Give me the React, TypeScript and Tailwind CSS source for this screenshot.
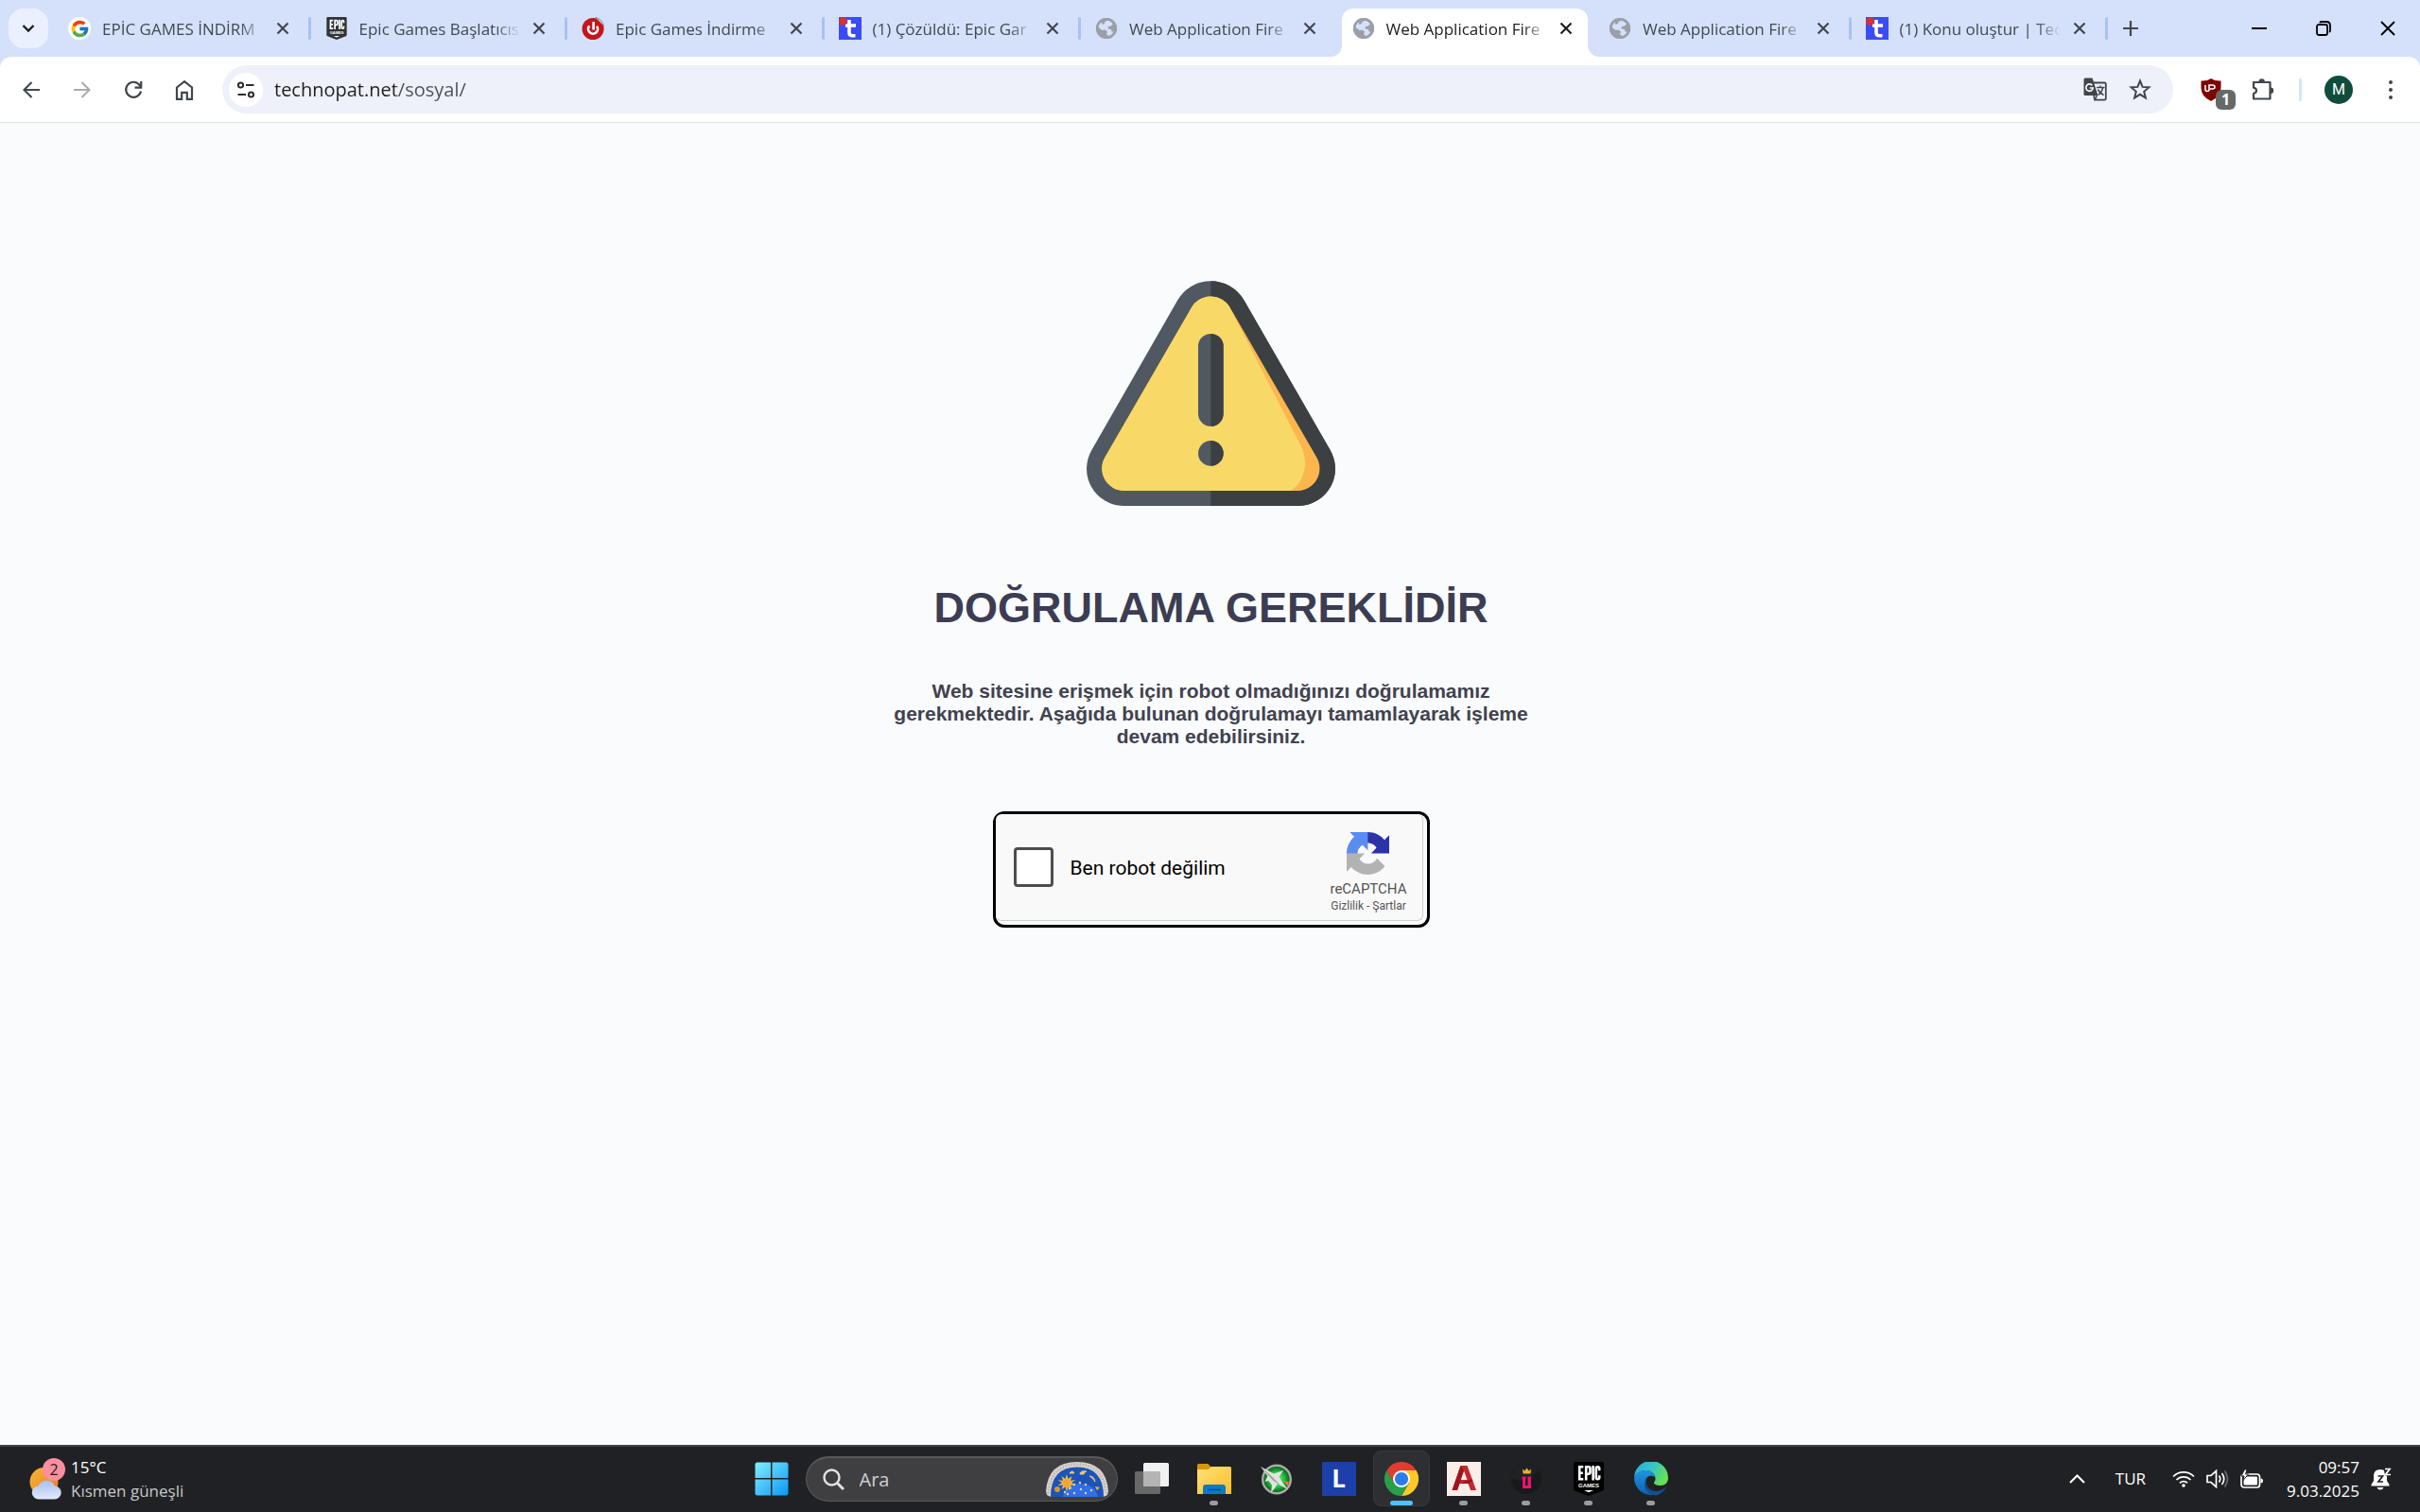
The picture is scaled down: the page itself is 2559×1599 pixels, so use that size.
import type { ReactNode } from "react";
import { FcGoogle } from "react-icons/fc";

/* ================= TYPES ================= */

interface TabData {
  title: string;
  icon: ReactNode;
  active?: boolean;
  separator?: boolean;
}

interface TaskbarAppProps {
  label: string;
  children: ReactNode;
  running?: boolean;
  active?: boolean;
}

/* ================= FAVICONS ================= */

const GlobeIcon = () => (
  <svg viewBox="0 0 24 24" className="size-6">
    <circle cx="12" cy="12" r="11" fill="#9aa0a6" />
    <path
      d="M14 3.500q3 .8 5 3.500l-2 2.500-3 .5-.5 2.500 3.500.5.500 2.500 2.500 0q-1.500 4-5.500 5l-2.500-2.500 1-2.500-2.500-2-3 .5-4.500-3.500q.5-3.500 3.500-5.500l1 3 2.500-1 .5-2z"
      fill="#d5e1fb"
    />
    <circle cx="12" cy="12" r="9.800" fill="none" stroke="#9aa0a6" strokeWidth="2.600" />
  </svg>
);

const GoogleIcon = () => (
  <span className="flex size-6 items-center justify-center rounded-full bg-white">
    <FcGoogle size={21} />
  </span>
);

const EpicIcon = ({ className, fill }: { className: string; fill: string }) => (
  <svg viewBox="0 0 32 36" className={className}>
    <path d="M2 0h28a2 2 0 0 1 2 2v26.500a2 2 0 0 1-1.300 1.900L16 36 1.300 30.400A2 2 0 0 1 0 28.500V2a2 2 0 0 1 2-2z" fill={fill} />
    <g fill="none" stroke="#fff" strokeWidth="2.600">
      <path d="M10.300 5.300H6.200v13h4.100M6.200 11.700h3.700" />
      <path d="M13.200 19.500v-14.200h2.600q1.700 0 1.700 1.700v4q0 1.700-1.700 1.700h-2.600" />
      <path d="M20.600 4v15.500" />
      <path d="M27.200 9.300V7q0-1.700-1.700-1.700t-1.700 1.700v9.600q0 1.700 1.700 1.700t1.700-1.700v-2.400" />
    </g>
    <text x="16" y="26.500" textAnchor="middle" fontFamily="Liberation Sans" fontWeight="700" fontSize="6" fill="#fff">
      GAMES
    </text>
    <path d="M11 30h10l-5 2.300z" fill="#fff" />
  </svg>
);

const PowerIcon = () => (
  <svg viewBox="0 0 24 24" className="size-6">
    <circle cx="12" cy="12.500" r="11.500" fill="#c4161c" />
    <path d="M14.500 0 Q22 2 23.500 9.500 L19 5z" fill="#c9c9c9" stroke="#777" strokeWidth=".6" />
    <path d="M12.600 5v8.500" stroke="#fff" strokeWidth="2.600" />
    <path d="M8.300 9.300a5 5 0 1 0 7.800.4" fill="none" stroke="#fff" strokeWidth="2.600" />
  </svg>
);

const TechnopatIcon = () => (
  <svg viewBox="0 0 24 24" className="size-6">
    <path d="M0 0h24v24H0z" fill="#3a4cf8" />
    <path d="M11 3v13.500q0 3.300 3.500 3.300h3M7 9h11" fill="none" stroke="#fff" strokeWidth="3.600" />
    <circle cx="4.500" cy="4.500" r="4.300" fill="#dc2f2f" />
  </svg>
);

/* ================= TABS ================= */

const TABS: TabData[] = [
  { title: "EPİC GAMES İNDİRM", icon: <GoogleIcon />, separator: true },
  { title: "Epic Games Başlatıcıs", icon: <EpicIcon className="h-6 w-6" fill="#303438" />, separator: true },
  { title: "Epic Games İndirme", icon: <PowerIcon />, separator: true },
  { title: "(1) Çözüldü: Epic Gar", icon: <TechnopatIcon />, separator: true },
  { title: "Web Application Fire", icon: <GlobeIcon /> },
  { title: "Web Application Fire", icon: <GlobeIcon />, active: true },
  { title: "Web Application Fire", icon: <GlobeIcon />, separator: true },
  { title: "(1) Konu oluştur | Tec", icon: <TechnopatIcon />, separator: true },
];

const Tab = ({ title, icon, active, separator }: TabData) => (
  <div className="relative flex h-full min-w-0 flex-1 items-center pl-[15px]">
    {active && (
      <div className="absolute top-[9px] right-[7px] bottom-0 left-[4px] rounded-t-xl bg-white">
        <svg viewBox="0 0 12 12" className="absolute bottom-0 -left-3 size-3">
          <path d="M12 0v12H0A12 12 0 0 0 12 0z" fill="#fff" />
        </svg>
        <svg viewBox="0 0 12 12" className="absolute -right-3 bottom-0 size-3">
          <path d="M0 0v12h12A12 12 0 0 1 0 0z" fill="#fff" />
        </svg>
      </div>
    )}
    <span className="relative shrink-0">{icon}</span>
    <span
      className={`relative ml-3 min-w-0 flex-1 overflow-hidden pt-[2px] text-[17px] leading-8 whitespace-nowrap mask-r-from-85% ${
        active ? "text-[#202124]" : "text-[#41494f]"
      }`}
    >
      {title}
    </span>
    <button aria-label="Sekmeyi kapat" className="relative mr-[15px] ml-2 flex size-6 shrink-0 items-center justify-center">
      <svg viewBox="0 0 14 14" className="size-[14px]">
        <path d="M1.500 1.500l11 11m0-11l-11 11" stroke={active ? "#1f1f1f" : "#3f474d"} strokeWidth="2.200" />
      </svg>
    </button>
    <span className={`h-6 w-[3px] shrink-0 rounded ${separator ? "bg-[#a8c1f6]" : ""}`} />
  </div>
);

const TabStrip = () => (
  <div className="flex h-[60px] items-center bg-[#d5e1fb]">
    <button aria-label="Sekmelerde ara" className="mr-[6px] ml-[9px] flex size-[42px] items-center justify-center rounded-2xl bg-[#eaf0fd]">
      <svg viewBox="0 0 14 10" className="h-[10px] w-[14px]">
        <path d="M1.500 2L7 7.500 12.500 2" fill="none" stroke="#1f1f1f" strokeWidth="2.400" />
      </svg>
    </button>
    <div className="flex h-full max-w-[2172px] flex-1">
      {TABS.map((tab, i) => (
        <Tab key={i} {...tab} />
      ))}
    </div>
    <button aria-label="Yeni sekme" className="ml-2 flex size-8 items-center justify-center">
      <svg viewBox="0 0 16 16" className="size-4">
        <path d="M8 0v16M0 8h16" stroke="#3f474d" strokeWidth="2.200" />
      </svg>
    </button>
    <div className="ml-auto flex text-black">
      <button aria-label="Simge durumuna küçült" className="flex h-10 w-[68px] items-center justify-center">
        <svg viewBox="0 0 16 16" className="size-4">
          <path d="M0 8h16" stroke="currentColor" strokeWidth="2" />
        </svg>
      </button>
      <button aria-label="Geri yükle" className="flex h-10 w-[68px] items-center justify-center">
        <svg viewBox="0 0 16 16" className="size-4" fill="none" stroke="currentColor" strokeWidth="1.800">
          <rect x="1" y="4" width="11" height="11" rx="2" />
          <path d="M4 2q.6-1 2-1h5q4 0 4 4v5q0 1.400-1 2" />
        </svg>
      </button>
      <button aria-label="Kapat" className="flex h-10 w-[68px] items-center justify-center">
        <svg viewBox="0 0 16 16" className="size-4">
          <path d="M1 1l14 14M15 1L1 15" stroke="currentColor" strokeWidth="1.800" />
        </svg>
      </button>
    </div>
  </div>
);

/* ================= TOOLBAR ================= */

const NavButton = ({ label, children }: { label: string; children: ReactNode }) => (
  <button aria-label={label} className="flex size-[54px] items-center justify-center">
    {children}
  </button>
);

const Toolbar = () => (
  <div className="bg-[#d5e1fb]">
    <div className="flex h-[70px] items-center rounded-t-xl border-b border-[#dfe3e8] bg-white pl-[6px]">
      <NavButton label="Geri">
        <svg viewBox="0 0 18 18" className="size-[18px]" fill="none" stroke="#41464b" strokeWidth="2.100">
          <path d="M18 9H1.500M9.500 1L1.500 9l8 8" />
        </svg>
      </NavButton>
      <NavButton label="İleri">
        <svg viewBox="0 0 18 18" className="size-[18px]" fill="none" stroke="#a9abad" strokeWidth="2.100">
          <path d="M0 9h16.500M8.500 1l8 8-8 8" />
        </svg>
      </NavButton>
      <NavButton label="Yenile">
        <svg viewBox="0 0 20 20" className="size-5" fill="none" stroke="#41464b" strokeWidth="2.200">
          <path d="M18 11.500a8 8 0 1 1-1.600-6.800L18 7M18.200 1v6.700h-6.700" />
        </svg>
      </NavButton>
      <NavButton label="Ana sayfa">
        <svg viewBox="0 0 20 22" className="h-[22px] w-5" fill="none" stroke="#41464b" strokeWidth="2.200">
          <path d="M2 8.500L10 2.200l8 6.300v12.300h-5.200v-7H7.200v7H2z" />
        </svg>
      </NavButton>
      <div className="ml-[13px] flex h-[51px] min-w-0 flex-1 items-center rounded-full bg-[#eef1f9] pr-[19px] pl-[7px]">
        <button aria-label="Site bilgileri" className="flex size-9 items-center justify-center rounded-full bg-white">
          <svg viewBox="0 0 20 20" className="size-5" fill="none" stroke="#2b2e31" strokeWidth="2">
            <circle cx="4.500" cy="5" r="2.600" />
            <circle cx="15.500" cy="15" r="2.600" />
            <path d="M10 5h8.500M1.500 15H10" />
          </svg>
        </button>
        <input
          type="text"
          aria-label="Adres çubuğu"
          defaultValue="technopat.net/sosyal/"
          className="ml-3 min-w-0 flex-1 bg-[linear-gradient(to_right,#1f1f1f_128px,#4b4f54_128px)] bg-clip-text text-[20px] leading-8 text-transparent outline-none"
        />
        <button aria-label="Bu sayfayı çevir" className="flex size-8 items-center justify-center">
          <svg viewBox="0 0 25 25" className="size-[25px]">
            <path d="M9 5.500h13.500a1.300 1.300 0 0 1 1.300 1.300v15.500a1.300 1.300 0 0 1-1.300 1.300H12z" fill="none" stroke="#41464b" strokeWidth="1.800" />
            <path d="M2 .5h7.500L15.500 19H2A1.500 1.500 0 0 1 .5 17.500V2A1.500 1.500 0 0 1 2 .5z" fill="#41464b" />
            <path d="M9.400 8.300A3.700 3.700 0 1 0 10.200 11H6.800" fill="none" stroke="#fff" strokeWidth="1.600" />
            <path d="M14 10.500h8.500M18 8.500v2M20.700 10.500q-1 5-5 8M15.500 12.500q1.500 4 6 6M14.500 19l-2 4" fill="none" stroke="#41464b" strokeWidth="1.500" />
          </svg>
        </button>
        <button aria-label="Bu sekmeye yer işareti koy" className="ml-4 flex size-8 items-center justify-center">
          <svg viewBox="0 0 24 24" className="size-6" fill="none" stroke="#41464b" strokeWidth="2">
            <path d="M12 2.500l2.600 6.400 6.900.5-5.300 4.400 1.700 6.700L12 16.800l-5.900 3.700 1.700-6.700-5.300-4.400 6.900-.5z" />
          </svg>
        </button>
      </div>
      <button aria-label="uBlock Origin" className="relative ml-6 flex size-8 items-center justify-center">
        <svg viewBox="0 0 22 24" className="h-6 w-[22px]">
          <path d="M11 0q4 2.800 10.500 2.500V10q0 9-10.500 14Q.5 19 .5 10V2.500Q7 2.800 11 0z" fill="#800000" />
          <path d="M5 7v4.500q0 2 2 2t2-2V7M9 13V7h3.500q2.500 0 2.500 2t-2.500 2H10" fill="none" stroke="#fff" strokeWidth="1.600" />
        </svg>
        <span className="absolute -right-[10px] -bottom-[5px] flex h-[21px] w-[21px] items-center justify-center rounded-md bg-[#666a66] text-[16px] font-bold text-white">
          1
        </span>
      </button>
      <button aria-label="Uzantılar" className="ml-[23px] flex size-8 items-center justify-center">
        <svg viewBox="0 0 26 26" className="size-[26px]">
          <path d="M3 5h17.500v17.500H3v-5.500q3-.8 3-3.200t-3-3.200z" fill="none" stroke="#41464b" strokeWidth="2.200" strokeLinejoin="round" />
          <path d="M8.500 4.500a3.200 3.200 0 0 1 6.400 0zM21 10.500a3.200 3.200 0 0 1 0 6.400z" fill="#41464b" />
        </svg>
      </button>
      <span className="ml-[22px] h-6 w-[3px] rounded bg-[#d5e3fb]" />
      <button aria-label="Profil" className="ml-6 flex size-[30px] items-center justify-center rounded-full bg-[#0f4c3c] font-[Roboto] text-[16px] text-white">
        M
      </button>
      <button aria-label="Menü" className="mr-[15px] ml-6 flex size-8 items-center justify-center">
        <svg viewBox="0 0 4 20" className="h-5 w-1" fill="#41464b">
          <circle cx="2" cy="2" r="2" />
          <circle cx="2" cy="10" r="2" />
          <circle cx="2" cy="18" r="2" />
        </svg>
      </button>
    </div>
  </div>
);

/* ================= PAGE ================= */

const WarningSign = () => (
  <svg viewBox="87 80 789 715" className="h-[238px] w-[263px]">
    <defs>
      <clipPath id="right-half">
        <path d="M481 0h500v900H481z" />
      </clipPath>
    </defs>
    {["#505961", "#3c4043"].map((fill, i) => (
      <g key={fill} fill={fill} clipPath={i ? "url(#right-half)" : undefined}>
        <path d="M375 142A122 122 0 0 1 587 142L860 617A118 118 0 0 1 761 795H202A118 118 0 0 1 103 617z" />
      </g>
    ))}
    <path d="M419 166A71 71 0 0 1 543 166L817 640A71 71 0 0 1 758 747H205A71 71 0 0 1 145 640z" fill="#fdb64e" />
    <path d="M419 166A71 71 0 0 1 539 160L764 598Q792 652 773 699Q760 732 735 747H205A71 71 0 0 1 145 640z" fill="#f8d968" />
    {["#505961", "#3c4043"].map((fill, i) => (
      <g key={fill} fill={fill} clipPath={i ? "url(#right-half)" : undefined}>
        <rect x="441" y="248" width="80" height="294" rx="40" />
        <circle cx="481" cy="628" r="40" />
      </g>
    ))}
  </svg>
);

const RecaptchaLogo = () => (
  <svg viewBox="0 0 64 64" className="size-[45px]">
    <path
      fill="#2c32a8"
      d="M64 31.955l-.016-1.370V4.687l-7.160 7.160C50.965 4.674 42.033.093 32.030.093c-10.400 0-19.635 4.960-25.458 12.640l11.736 11.860a15.550 15.550 0 0 1 4.754-5.334c2.050-1.600 4.952-2.906 8.968-2.906.485 0 .860.057 1.135.163 4.976.393 9.288 3.140 11.828 7.124l-8.307 8.307L64 31.953"
    />
    <path
      fill="#5a8df2"
      d="M31.862.094l-1.370.016H4.594l7.160 7.160C4.580 13.147 0 22.080 0 32.080c0 10.400 4.960 19.635 12.640 25.458L24.500 45.803a15.550 15.550 0 0 1-5.334-4.754c-1.600-2.050-2.906-4.952-2.906-8.968 0-.485.057-.860.163-1.135.393-4.976 3.140-9.288 7.124-11.828l8.307 8.307L31.860.095"
    />
    <path
      fill="#b3b3b3"
      d="M.001 32.045l.016 1.370v25.898l7.160-7.160c5.873 7.173 14.805 11.754 24.806 11.754 10.400 0 19.635-4.960 25.458-12.640l-11.736-11.860a15.550 15.550 0 0 1-4.754 5.334c-2.050 1.600-4.952 2.906-8.968 2.906-.485 0-.860-.057-1.135-.163-4.976-.393-9.288-3.140-11.828-7.124l8.307-8.307c-10.522.040-22.400.066-27.295-.005"
    />
  </svg>
);

const Recaptcha = () => (
  <div className="w-[462px] rounded-xl border-3 border-black pr-1 pb-1 font-[Roboto]">
    <div className="flex h-[113px] items-center justify-between rounded-md border-r border-b border-[#cfcfcf] bg-[#f9f9f9] pr-4 pl-[19px]">
      <label className="flex items-center gap-[18px] text-[21px] text-black">
        <input type="checkbox" className="size-[42px] appearance-none rounded-[4px] border-3 border-[#4d4d4d] bg-white" />
        <span className="pt-1">Ben robot değilim</span>
      </label>
      <div className="flex flex-col items-center pt-3 text-[#555]">
        <RecaptchaLogo />
        <p className="mt-[5px] text-[15px] leading-5">reCAPTCHA</p>
        <p className="text-[12px] leading-4">
          <a href="#gizlilik">Gizlilik</a>
          <span> - </span>
          <a href="#sartlar">Şartlar</a>
        </p>
      </div>
    </div>
  </div>
);

const Verification = () => (
  <main className="flex flex-1 flex-col items-center bg-[#f9fbfc] pt-[167px] pl-[2px] font-['Liberation_Sans',sans-serif]">
    <WarningSign />
    <h1 className="mt-[82px] text-[45px] leading-[52px] font-bold text-[#3c3d53]">DOĞRULAMA GEREKLİDİR</h1>
    <p className="mt-[50px] w-[700px] text-center text-[21px] leading-[24px] font-bold text-[#41424f]">
      Web sitesine erişmek için robot olmadığınızı doğrulamamız gerekmektedir. Aşağıda bulunan doğrulamayı tamamlayarak
      işleme devam edebilirsiniz.
    </p>
    <div className="mt-[67px]">
      <Recaptcha />
    </div>
  </main>
);

/* ================= TASKBAR ================= */

const TaskbarApp = ({ label, children, running, active }: TaskbarAppProps) => (
  <button aria-label={label} className="relative flex h-full w-[66px] items-center justify-center">
    {active && <span className="absolute inset-x-[3px] inset-y-1 rounded-lg border border-[#35373a] bg-[#2d2f32]" />}
    <span className="relative">{children}</span>
    {running && (
      <span className={`absolute bottom-[5px] h-[5px] rounded-full ${active ? "w-6 bg-[#4cc2ff]" : "w-[9px] bg-[#9b9c9e]"}`} />
    )}
  </button>
);

const WeatherIcon = () => (
  <svg viewBox="0 0 38 46" className="h-[46px] w-[38px]">
    <defs>
      <linearGradient id="sun" x1="0" y1="0" x2="1" y2="1">
        <stop offset="0" stopColor="#f8b73a" />
        <stop offset="1" stopColor="#e87a1c" />
      </linearGradient>
      <linearGradient id="cloud" x1="0" y1="0" x2="0" y2="1">
        <stop offset="0" stopColor="#a9bfee" />
        <stop offset="1" stopColor="#dfeafc" />
      </linearGradient>
    </defs>
    <circle cx="15.500" cy="26" r="15" fill="url(#sun)" />
    <path d="M10 44.500a7 7 0 0 1-.500-14 9.500 9.500 0 0 1 17.500 0 7 7 0 0 1-.500 14z" fill="url(#cloud)" />
    <circle cx="26" cy="13" r="12" fill="#fb8f9f" />
    <text x="26" y="18.500" textAnchor="middle" fontFamily="Open Sans" fontSize="16" fill="#1f1f1f">
      2
    </text>
  </svg>
);

const WindowsIcon = () => (
  <svg viewBox="0 0 36 36" className="size-9">
    <defs>
      <linearGradient id="win" x1="0" y1="0" x2="1" y2="1">
        <stop offset="0" stopColor="#7ff0ff" />
        <stop offset="1" stopColor="#0d95f7" />
      </linearGradient>
    </defs>
    <path d="M2 .5h15v16.500H.5V2zM18.500.5H34l1.500 1.500v15H18.500zM.5 18.500H17v17H2L.5 34zM18.500 18.500h17V34L34 35.500H18.500z" fill="url(#win)" />
  </svg>
);

const DOME_DOTS = [
  [20, 32], [25, 28], [30, 33], [37, 29], [42, 33], [36, 22], [42, 24], [48, 30], [30, 24], [23, 34],
];

// Zodiac half-dial shown at the end of the search box
const DomeIcon = () => (
  <svg viewBox="0 0 66 37" className="h-[37px] w-[66px]">
    <path d="M0 31Q2 0 33 0t33 31l-1 4-4 2H5l-4-2z" fill="#d8d2cc" />
    <path d="M2.500 33Q5 2.500 33 2.500T63.500 33" fill="none" stroke="#b3aaa2" strokeWidth="2.500" strokeDasharray="1 2" />
    <path d="M5 37Q5 5.500 33 5.500T61 37z" fill="#1c54b8" />
    <path d="M18 37q2-14 18-14t19 14z" fill="#2f6fe8" />
    <path d="M22 13l1.500 5 4-3-1.500 4.700 5.500-.4-4.500 2.700 4.500 3-5.500-.4 1.500 4.700-4-3-1.500 5-1.500-5-4 3 1.500-4.700-5.500.4 4.500-3-4.500-2.700 5.500.4-1.500-4.700 4 3z" fill="#f0b84b" />
    <circle cx="22" cy="22" r="4" fill="#f6a72c" />
    <path d="M25 12q3-4 5 0zM36 13q0-4 7-3-3 1-3 3zM46 15q5 0 6 6-2-4-6-6z" fill="#e9c878" stroke="#e9c878" />
    <circle cx="12" cy="29" r="3" fill="#d9952c" />
    <path d="M52 26l5 1-3 3z" fill="#e9b24b" />
    {DOME_DOTS.map(([cx, cy]) => (
      <circle key={`${cx}-${cy}`} cx={cx} cy={cy} r="1.200" fill="#f3cf8a" />
    ))}
  </svg>
);

const TaskViewIcon = () => (
  <svg viewBox="0 0 36 36" className="size-9">
    <rect x="9" y="1" width="27" height="25" rx="1.500" fill="#f2f2f2" />
    <rect x="0" y="10" width="27" height="24" rx="1.500" fill="#777" fillOpacity=".82" />
    <path d="M9 10h18v16H10a1 1 0 0 1-1-1z" fill="#b5b5b5" />
  </svg>
);

const FolderIcon = () => (
  <svg viewBox="0 0 36 36" className="size-9">
    <defs>
      <linearGradient id="folder" x1="0" y1="0" x2="1" y2="1">
        <stop offset="0" stopColor="#ffe07a" />
        <stop offset="1" stopColor="#fbbf27" />
      </linearGradient>
    </defs>
    <path d="M0 3.500Q0 2 1.500 2h10l3 3.500H20V9H0z" fill="#d9960c" />
    <path d="M0 8h11.500l3.500-3h19.500Q36 5 36 6.500V34H0z" fill="url(#folder)" />
    <path d="M6 34v-7q0-3 3-3h18q3 0 3 3v7z" fill="#1078c8" />
    <path d="M11 29.500h14" stroke="#0a4c8a" strokeWidth="1.500" />
  </svg>
);

const AfterburnerIcon = () => (
  <svg viewBox="0 0 36 36" className="size-9">
    <defs>
      <radialGradient id="burner">
        <stop offset="0" stopColor="#8dff7a" />
        <stop offset=".55" stopColor="#1fc03c" />
        <stop offset="1" stopColor="#0c4a1c" />
      </radialGradient>
    </defs>
    <circle cx="18" cy="18.500" r="14.800" fill="url(#burner)" stroke="#a6aea6" strokeWidth="2.400" />
    <path d="M1 5l14 7.500 10-3.500-4.500 7 4.500 7 5 6-7-3.500-4-2.500-3 5-4 4.500 1-8-3.500-4.500-4 1 3-6z" fill="#e1e3e0" />
    <path d="M1 5l12 10.500 9 9.500-8-5.500z" fill="#9ba09b" />
    <path d="M25 20l6 1-1.500 5z" fill="#e8743a" />
  </svg>
);

const ChromeIcon = () => (
  <svg viewBox="0 0 36 36" className="size-9">
    <path d="M18 18L2.400 9A18 18 0 0 1 33.600 9z" fill="#e33b2e" />
    <path d="M18 9h15.600A18 18 0 0 1 18 36l7.800-13.500z" fill="#fdc928" />
    <path d="M2.400 9l7.800 13.500 7.800 4.500 7.800-4.500L18 36A18 18 0 0 1 2.400 9z" fill="#2a9f4b" />
    <path d="M2.400 9l7.800 13.500L18 9z" fill="#e33b2e" />
    <circle cx="18" cy="18" r="9" fill="#fff" />
    <circle cx="18" cy="18" r="7.100" fill="#2b7de9" />
  </svg>
);

const AutocadIcon = () => (
  <svg viewBox="0 0 36 36" className="size-9">
    <path d="M0 0h36v36H0z" fill="#faeee8" />
    <path d="M14.500 4h7L31 30h-6l-2.500-7h-9L11 30H5.500z" fill="#c3272f" />
    <path d="M18 9.500l3.500 9.500h-7z" fill="#faeee8" />
    <path d="M14.500 4L5.500 30H11l7-21zM13.500 23l13-5 .8 2-4 3z" fill="#9d161f" />
  </svg>
);

const CrownIcon = () => (
  <svg viewBox="0 0 36 36" className="size-9">
    <circle cx="18" cy="18" r="16" fill="#18191b" />
    <path d="M18 2a16 16 0 0 0-16 16l16 3L31 9A16 16 0 0 0 18 2z" fill="#202224" />
    <path d="M14 7.500l2.300 2L18.500 6.500l2.200 3L23 7.500l-.5 5h-8z" fill="#e3b437" />
    <path d="M13.500 15.500h4v3H17v6.500h2.500v-9.500H23V28H14v-9.500h-.5z" fill="#f2116d" />
  </svg>
);

const EdgeIcon = () => (
  <svg viewBox="0 0 36 36" className="size-9">
    <defs>
      <linearGradient id="edge-top" x1="0" y1="0" x2="1" y2=".5">
        <stop offset="0" stopColor="#2aa7e0" />
        <stop offset=".55" stopColor="#35c6c4" />
        <stop offset="1" stopColor="#67e052" />
      </linearGradient>
      <linearGradient id="edge-side" x1="0" y1="0" x2="0" y2="1">
        <stop offset="0" stopColor="#2196e0" />
        <stop offset="1" stopColor="#0b5fb4" />
      </linearGradient>
    </defs>
    <path d="M0 17A18 18 0 0 1 36 17c0 5-3.500 8-8 8-4 0-7-1-7-3 0-1 1.500-1.500 1.500-4C22.500 12 17 9 12 9S1 12 0 17z" fill="url(#edge-top)" />
    <path d="M0 17C1 12 6 9 12 9c5 0 9 2.500 10 7-5-3-10-.5-10 5 0 7 5 13 12 13a18 18 0 0 1-24-17z" fill="url(#edge-side)" />
    <path d="M16 15c-5 3-4 11 1 14 5 3.500 12 2 17-3-2 5-6 8-10 9.500-7 0-13-5-13-12 0-4 2-7 5-8.500z" fill="#124e8f" />
  </svg>
);

const Taskbar = () => (
  <footer className="grid h-[71px] grid-cols-[1fr_auto_1fr] items-center border-t-2 border-[#404143] bg-[#202124] pb-[2px] text-[18px] leading-[25px] text-white">
    <button className="flex w-fit items-center gap-[6px] pl-[31px] text-left">
      <WeatherIcon />
      <span className="text-[17px]">
        15°C
        <span className="block text-[#c6c7c8]">Kısmen güneşli</span>
      </span>
    </button>

    <div className="flex h-[67px] items-center pl-[2px]">
      <TaskbarApp label="Başlat">
        <WindowsIcon />
      </TaskbarApp>
      <label className="mx-[3px] flex h-12 w-[330px] items-center rounded-full border border-t-2 border-[#58595b] bg-[#3f3f42] pr-[9px] pl-[17px]">
        <svg viewBox="0 0 23 23" className="size-[23px] shrink-0" fill="none" stroke="#e2e2e2" strokeWidth="2.400">
          <circle cx="9.500" cy="9.500" r="8" />
          <path d="M15.500 15.500l6.500 6.500" strokeWidth="3" />
        </svg>
        <input
          type="search"
          aria-label="Ara"
          placeholder="Ara"
          className="mx-4 min-w-0 flex-1 bg-transparent text-[20px] outline-none placeholder:text-[#cfcfcf]"
        />
        <DomeIcon />
      </label>
      <TaskbarApp label="Görev görünümü">
        <TaskViewIcon />
      </TaskbarApp>
      <TaskbarApp label="Dosya Gezgini" running>
        <FolderIcon />
      </TaskbarApp>
      <TaskbarApp label="Afterburner">
        <AfterburnerIcon />
      </TaskbarApp>
      <TaskbarApp label="Uygulama">
        <span className="flex size-9 items-center justify-center bg-[#1c3faa] font-['Open_Sans'] text-[26px] font-bold">L</span>
      </TaskbarApp>
      <TaskbarApp label="Chrome" running active>
        <ChromeIcon />
      </TaskbarApp>
      <TaskbarApp label="AutoCAD" running>
        <AutocadIcon />
      </TaskbarApp>
      <TaskbarApp label="Oyun" running>
        <CrownIcon />
      </TaskbarApp>
      <TaskbarApp label="Epic Games" running>
        <EpicIcon className="h-9 w-8" fill="#000" />
      </TaskbarApp>
      <TaskbarApp label="Edge" running>
        <EdgeIcon />
      </TaskbarApp>
    </div>

    <div className="flex items-center justify-end pr-[30px]">
      <button aria-label="Gizli simgeleri göster">
        <svg viewBox="0 0 17 10" className="h-[10px] w-[17px]">
          <path d="M1 9l7.500-7.500L16 9" fill="none" stroke="#fff" strokeWidth="2" />
        </svg>
      </button>
      <button className="ml-8 text-[17px]">TUR</button>
      <button aria-label="Ağ, ses ve pil" className="ml-[28px] flex items-center gap-3">
        <svg viewBox="0 0 24 18" className="h-[18px] w-6" fill="none" stroke="#fff" strokeWidth="1.700">
          <path d="M1 6.500a15.500 15.500 0 0 1 22 0M4.500 10a10.500 10.500 0 0 1 15 0M8 13.300a5.600 5.600 0 0 1 8 0" />
          <circle cx="12" cy="16" r="1.800" fill="#fff" stroke="none" />
        </svg>
        <svg viewBox="0 0 24 20" className="h-5 w-6" fill="none" stroke="#fff" strokeWidth="1.700">
          <path d="M1 6.500h4L10.500 1.500v17L5 13.500H1z" />
          <path d="M13.500 6.500q2.500 3.500 0 7M16.500 4q4.500 6 0 12" />
          <path d="M19.500 1.500q6 8.500 0 17" stroke="#6c6d6f" />
        </svg>
        <svg viewBox="0 0 24 20" className="h-5 w-6">
          <rect x="1" y="5" width="19.500" height="14" rx="3" fill="none" stroke="#fff" strokeWidth="1.700" />
          <rect x="3.500" y="7.500" width="14.500" height="9" rx="1" fill="#fff" />
          <path d="M21.500 9.500q2.500 0 2.500 2.500t-2.500 2.500z" fill="#fff" />
          <path d="M4.500 0L1 7h3l-1.500 5L8.500 5h-3L7 0z" fill="#fff" stroke="#202124" />
        </svg>
      </button>
      <button className="ml-[25px] text-right text-[17px]">
        <span className="block">09:57</span>
        <span className="block">9.03.2025</span>
      </button>
      <button aria-label="Rahatsız etme" className="ml-3">
        <svg viewBox="0 0 22 24" className="h-6 w-[22px]">
          <path d="M10 2q7 0 7 7v5l2.500 4v1.500H.5V18L3 14V9q0-7 7-7zM6.500 21h7q-1 2.500-3.500 2.500T6.500 21z" fill="#fff" />
          <path d="M13.500 0H22v8.500h-7z" fill="#202124" />
          <path d="M15 1.500h5L15.500 7.500H21" fill="none" stroke="#fff" strokeWidth="1.700" />
          <path d="M7.500 9h5L8 15h5" fill="none" stroke="#202124" strokeWidth="1.700" />
        </svg>
      </button>
    </div>
  </footer>
);

/* ================= APP ================= */

const App = () => (
  <div className="flex min-h-screen flex-col font-['Open_Sans','Noto_Sans',sans-serif]">
    <header>
      <TabStrip />
      <Toolbar />
    </header>
    <Verification />
    <Taskbar />
  </div>
);

export default App;
